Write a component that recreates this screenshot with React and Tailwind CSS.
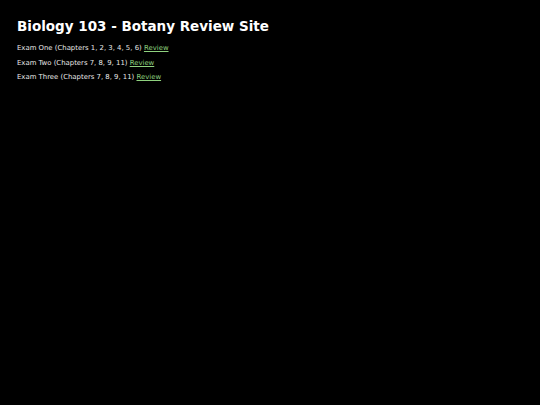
const exams = [
  { name: "Exam One", chapters: "1, 2, 3, 4, 5, 6" },
  { name: "Exam Two", chapters: "7, 8, 9, 11" },
  { name: "Exam Three", chapters: "7, 8, 9, 11" },
];

export default function App() {
  return (
    <div className="min-h-[405px] bg-black text-white px-[17px] pt-[17px] font-['DejaVu_Sans',Verdana,sans-serif]">
      <h1 className="text-[13.5px] font-bold leading-[18px] mb-[8px]">
        Biology 103 - Botany Review Site
      </h1>
      {exams.map((exam) => (
        <p key={exam.name} className="text-[6.9px] leading-[10px] mb-[4.6px] text-[#e8e8e8]">
          {exam.name} (Chapters {exam.chapters}){" "}
          <a href="#" className="underline text-[#8fd27f]">
            Review
          </a>
        </p>
      ))}
    </div>
  );
}
